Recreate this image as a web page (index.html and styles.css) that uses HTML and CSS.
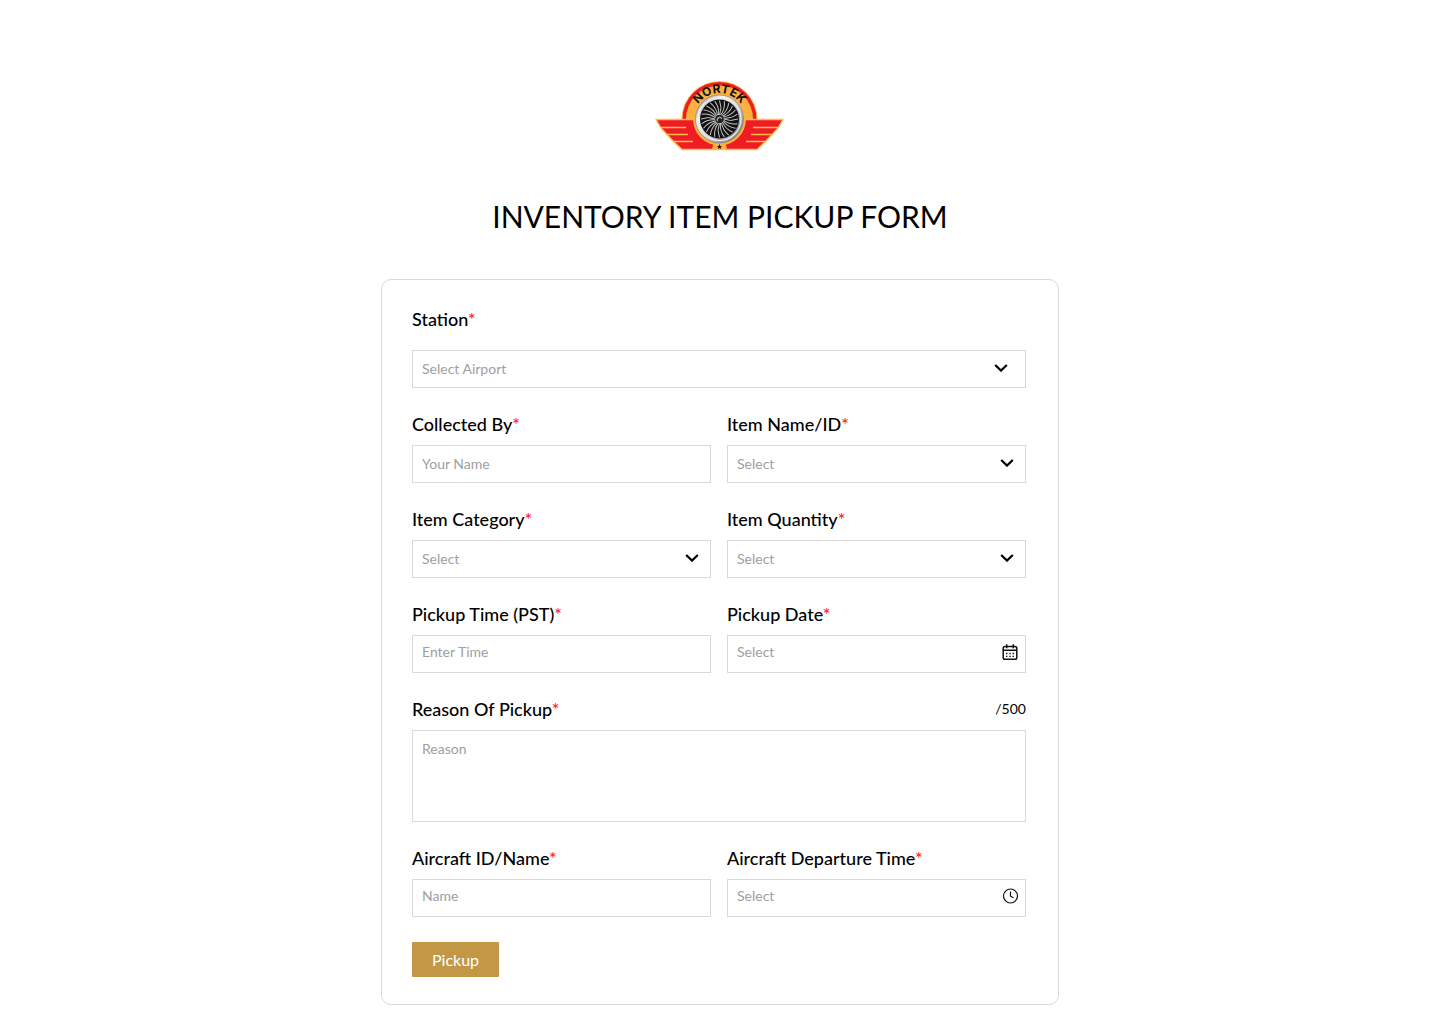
FILE: index.html
```html
<!DOCTYPE html>
<html lang="en">
<head>
    <meta charset="UTF-8">
    <meta name="viewport" content="width=device-width, initial-scale=1.0">
    <title>Nortek - Inventory Item Pickup Form</title>
    <link rel="stylesheet" href="styles.css">
</head>
<body>
    <!-- Shared icons -->
    <svg class="sprite" aria-hidden="true">
        <symbol id="chevron" viewBox="0 0 14 8">
            <path d="M1.200 1l5.800 5.600L12.800 1" fill="none" stroke="#000" stroke-width="2.200"/>
        </symbol>
        <symbol id="blades" viewBox="-20 -20 40 40">
            <g fill="none" stroke="#c4c4c4" stroke-width="1">
                <path id="blade" d="M0-4Q3-11 0-18.500"/>
                <use href="#blade" transform="rotate(15)"/>
                <use href="#blade" transform="rotate(30)"/>
                <use href="#blade" transform="rotate(45)"/>
                <use href="#blade" transform="rotate(60)"/>
                <use href="#blade" transform="rotate(75)"/>
            </g>
        </symbol>
    </svg>

    <header class="header">
        <svg class="logo" viewBox="0 0 130 72" role="img" aria-label="Nortek">
            <defs>
                <linearGradient id="rim" x1="0" y1="0" x2="1" y2="1">
                    <stop offset="0" stop-color="#8a8a8a"/>
                    <stop offset="0.3" stop-color="#f4f4f4"/>
                    <stop offset="0.6" stop-color="#c4c4c4"/>
                    <stop offset="1" stop-color="#666"/>
                </linearGradient>
                <path id="arc" d="M38.500 39a26 26 0 0 1 52 0"/>
            </defs>
            <path d="M26.500 40V39a38 38 0 0 1 76 0v1z" fill="#fbc04a"/>
            <path d="M27.500 40V39a37 37 0 0 1 74 0v1z" fill="#ee1c25"/>
            <path d="M31 40V39a33.500 33.500 0 0 1 67 0v1z" fill="#fbb040"/>
            <path d="M1 39.500H128L123 48L117 54.500L111 61L102 69.500H27L18 61L12 54.500L6 48Z" fill="#ee1c25"/>
            <path d="M39 39.500H1L6 48L12 54.500L18 61L27 69.500H102L111 61L117 54.500L123 48L128 39.500H90" fill="none" stroke="#fbc04a" stroke-width="1.300" stroke-linejoin="round"/>
            <path d="M6 47.500H31M12 54.500H33M18 61.500H38M123 47.500H98M117 54.500H96M111 61.500H91" stroke="#fbc04a" stroke-width="1.300"/>
            <path d="M59 62l-2 7h15l-2-7z" fill="#fbb040"/>
            <circle cx="64.500" cy="39" r="26.500" fill="#fbb040"/>
            <circle cx="64.500" cy="39" r="24" fill="url(#rim)" stroke="#777" stroke-width="0.600"/>
            <circle cx="64.500" cy="39" r="21.500" fill="none" stroke="#eee" stroke-width="1.200"/>
            <circle cx="64.500" cy="39" r="19.500" fill="#111"/>
            <g transform="translate(64.500 39)">
                <use href="#blades" x="-20" y="-20" width="40" height="40"/>
                <use href="#blades" x="-20" y="-20" width="40" height="40" transform="rotate(90)"/>
                <use href="#blades" x="-20" y="-20" width="40" height="40" transform="rotate(180)"/>
                <use href="#blades" x="-20" y="-20" width="40" height="40" transform="rotate(270)"/>
                <circle r="4" fill="#222"/>
                <path d="M-2 2C-3-2 2-3 2 0" fill="none" stroke="#aaa" stroke-width="1.200"/>
            </g>
            <path d="M64.500 64l.7 1.900h2l-1.600 1.200.6 2-1.700-1.200-1.700 1.200.6-2-1.600-1.200h2z" fill="#111"/>
            <text class="logo-text"><textPath href="#arc" startOffset="50%">NORTEK</textPath></text>
        </svg>
        <h1>INVENTORY ITEM PICKUP FORM</h1>
    </header>

    <form class="card">
        <div class="field field-station">
            <label for="station">Station<span class="required">*</span></label>
            <div class="control control-wide">
                <select id="station" required>
                    <option value="">Select Airport</option>
                </select>
                <svg class="chevron"><use href="#chevron"/></svg>
            </div>
        </div>

        <div class="field">
            <label for="collectedBy">Collected By<span class="required">*</span></label>
            <div class="control">
                <input type="text" id="collectedBy" placeholder="Your Name" required>
            </div>
        </div>
        <div class="field">
            <label for="itemName">Item Name/ID<span class="required">*</span></label>
            <div class="control">
                <select id="itemName" required>
                    <option value="">Select</option>
                </select>
                <svg class="chevron"><use href="#chevron"/></svg>
            </div>
        </div>

        <div class="field">
            <label for="itemCategory">Item Category<span class="required">*</span></label>
            <div class="control">
                <select id="itemCategory" required>
                    <option value="">Select</option>
                </select>
                <svg class="chevron"><use href="#chevron"/></svg>
            </div>
        </div>
        <div class="field">
            <label for="itemQuantity">Item Quantity<span class="required">*</span></label>
            <div class="control">
                <select id="itemQuantity" required>
                    <option value="">Select</option>
                </select>
                <svg class="chevron"><use href="#chevron"/></svg>
            </div>
        </div>

        <div class="field">
            <label for="pickupTime">Pickup Time (PST)<span class="required">*</span></label>
            <div class="control control-picker">
                <input type="text" id="pickupTime" placeholder="Enter Time" required>
            </div>
        </div>
        <div class="field">
            <label for="pickupDate">Pickup Date<span class="required">*</span></label>
            <div class="control control-picker">
                <input type="text" id="pickupDate" placeholder="Select" required>
                <svg class="picker-icon" viewBox="0 0 16 16" fill="none" stroke="#111">
                    <rect x="1.200" y="2.500" width="13.600" height="12.700" rx="1.800" stroke-width="1.500"/>
                    <path d="M1 6.300h14M4.700.3v4M11.300.3v4" stroke-width="1.500"/>
                    <path d="M4 9.500h1.400m1.900 0h1.400m1.900 0h1.400M4 12.300h1.400m1.900 0h1.400m1.900 0h1.400" stroke-width="1.300"/>
                </svg>
            </div>
        </div>

        <div class="field field-full">
            <div class="label-row">
                <label for="reason">Reason Of Pickup<span class="required">*</span></label>
                <span class="counter">/500</span>
            </div>
            <textarea id="reason" maxlength="500" placeholder="Reason" required></textarea>
        </div>

        <div class="field">
            <label for="aircraft">Aircraft ID/Name<span class="required">*</span></label>
            <div class="control control-picker">
                <input type="text" id="aircraft" placeholder="Name" required>
            </div>
        </div>
        <div class="field">
            <label for="departure">Aircraft Departure Time<span class="required">*</span></label>
            <div class="control control-picker">
                <input type="text" id="departure" placeholder="Select" required>
                <svg class="picker-icon" viewBox="0 0 16 16" fill="none" stroke="#111" stroke-width="1.200">
                    <circle cx="8.500" cy="8" r="7"/>
                    <path d="M8.500 3.500v4.700l3 1.600"/>
                </svg>
            </div>
        </div>

        <button type="submit" class="button">Pickup</button>
    </form>
</body>
</html>
```
FILE: styles.css
```css
* {
    box-sizing: border-box;
}
body {
    font-family: Lato, 'Open Sans', sans-serif;
    margin: 0;
    padding: 80px 20px 19px;
    background-color: #fff;
    color: #000;
}
.sprite {
    position: absolute;
    width: 0;
    height: 0;
}
.header {
    display: flex;
    flex-direction: column;
    align-items: center;
}
.logo {
    width: 130px;
    height: 72px;
}
.logo-text {
    font-family: Inter, sans-serif;
    font-size: 12px;
    font-weight: 700;
    text-anchor: middle;
    fill: #111;
}
h1 {
    margin: 46px 0 44px;
    font-size: 30px;
    font-weight: 400;
    line-height: 37px;
    text-align: center;
}
.card {
    display: grid;
    grid-template-columns: 1fr 1fr;
    gap: 25px 16px;
    max-width: 678px;
    margin: 0 auto;
    padding: 28px 32px 27px 30px;
    border: 1px solid #d9d9d9;
    border-radius: 10px;
}
.field {
    display: flex;
    flex-direction: column;
    gap: 10px;
}
.field-station,
.field-full {
    grid-column: 1 / -1;
}
.field-station {
    gap: 20px;
}
label {
    font-size: 18px;
    font-weight: 500;
    line-height: 22px;
}
.required {
    color: #ff1a1a;
}
.label-row {
    display: flex;
    justify-content: space-between;
    align-items: center;
}
.counter {
    font-size: 14px;
    line-height: 22px;
}

/* input and its icon share one grid cell */
.control {
    display: grid;
    align-items: center;
}
.control > * {
    grid-area: 1 / 1;
}
input,
select,
textarea {
    width: 100%;
    height: 38px;
    padding: 0 9px 2px;
    border: 1px solid #d9d9d9;
    border-radius: 0;
    background: #fff;
    color: #a0a0a0;
    font-family: inherit;
    font-size: 14px;
    appearance: none;
}
textarea {
    display: block;
    height: 92px;
    padding: 9px;
    line-height: 18px;
    resize: none;
}
::placeholder {
    color: #a0a0a0;
}
.chevron {
    justify-self: end;
    width: 14px;
    height: 8px;
    margin: 0 12px 2px 0;
    pointer-events: none;
}
.control-wide .chevron {
    margin-right: 18px;
}
.control-picker input {
    padding-bottom: 6px;
}
.picker-icon {
    justify-self: end;
    width: 16px;
    height: 16px;
    margin: 0 8px 4px 0;
    pointer-events: none;
}
.button {
    justify-self: start;
    height: 35px;
    padding: 0 20px;
    border: none;
    border-radius: 1px;
    background-color: #c29847;
    color: #fff;
    font-family: inherit;
    font-size: 16px;
    cursor: pointer;
}
.button:hover {
    background-color: #b0883c;
}

@media (max-width: 600px) {
    .card {
        grid-template-columns: 1fr;
    }
}
```
